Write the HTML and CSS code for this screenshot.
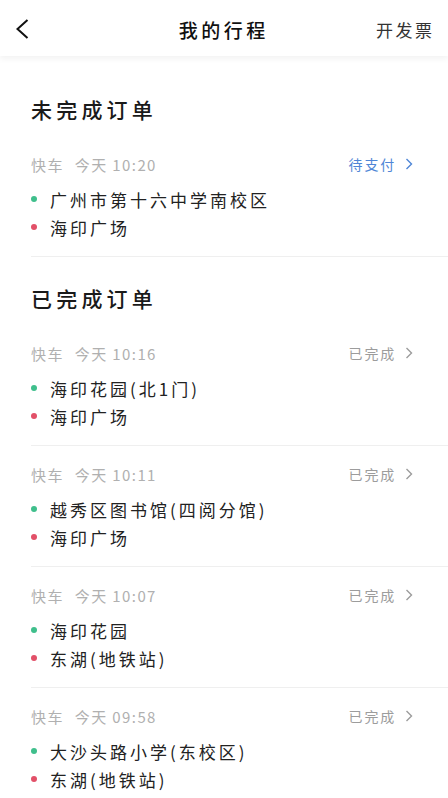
FILE: index.html
```html
<!DOCTYPE html>
<html lang="zh-CN">
<head>
<meta charset="utf-8">
<title>我的行程</title>
<link rel="stylesheet" href="styles.css">
</head>
<body>
<header class="topbar">
  <div class="back">
    <svg width="14" height="20" viewBox="0 0 14 20"><path d="M12.5 1 L2.5 10 L12.5 19" fill="none" stroke="#111" stroke-width="2"/></svg>
  </div>
  <h1 class="title">我的行程</h1>
  <div class="invoice">开发票</div>
</header>

<main>
  <section class="section first">
    <h2 class="heading">未完成订单</h2>
    <div class="order">
      <div class="meta">
        <span class="type">快车</span><span class="time">今天 10:20</span>
        <span class="status pending">待支付<svg class="chev" width="8" height="14" viewBox="0 0 8 14"><path d="M1.5 2 L6.5 7 L1.5 12" fill="none" stroke="currentColor" stroke-width="1.4"/></svg></span>
      </div>
      <div class="place"><i class="dot start"></i>广州市第十六中学南校区</div>
      <div class="place"><i class="dot end"></i>海印广场</div>
    </div>
  </section>

  <section class="section">
    <h2 class="heading">已完成订单</h2>
    <div class="order">
      <div class="meta">
        <span class="type">快车</span><span class="time">今天 10:16</span>
        <span class="status">已完成<svg class="chev" width="8" height="14" viewBox="0 0 8 14"><path d="M1.5 2 L6.5 7 L1.5 12" fill="none" stroke="currentColor" stroke-width="1.4"/></svg></span>
      </div>
      <div class="place"><i class="dot start"></i>海印花园(北1门)</div>
      <div class="place"><i class="dot end"></i>海印广场</div>
    </div>
    <div class="order">
      <div class="meta">
        <span class="type">快车</span><span class="time">今天 10:11</span>
        <span class="status">已完成<svg class="chev" width="8" height="14" viewBox="0 0 8 14"><path d="M1.5 2 L6.5 7 L1.5 12" fill="none" stroke="currentColor" stroke-width="1.4"/></svg></span>
      </div>
      <div class="place"><i class="dot start"></i>越秀区图书馆(四阅分馆)</div>
      <div class="place"><i class="dot end"></i>海印广场</div>
    </div>
    <div class="order">
      <div class="meta">
        <span class="type">快车</span><span class="time">今天 10:07</span>
        <span class="status">已完成<svg class="chev" width="8" height="14" viewBox="0 0 8 14"><path d="M1.5 2 L6.5 7 L1.5 12" fill="none" stroke="currentColor" stroke-width="1.4"/></svg></span>
      </div>
      <div class="place"><i class="dot start"></i>海印花园</div>
      <div class="place"><i class="dot end"></i>东湖(地铁站)</div>
    </div>
    <div class="order">
      <div class="meta">
        <span class="type">快车</span><span class="time">今天 09:58</span>
        <span class="status">已完成<svg class="chev" width="8" height="14" viewBox="0 0 8 14"><path d="M1.5 2 L6.5 7 L1.5 12" fill="none" stroke="currentColor" stroke-width="1.4"/></svg></span>
      </div>
      <div class="place"><i class="dot start"></i>大沙头路小学(东校区)</div>
      <div class="place"><i class="dot end"></i>东湖(地铁站)</div>
    </div>
  </section>
</main>
</body>
</html>
```

FILE: styles.css
```css
* { box-sizing: border-box; }
html, body {
  margin: 0;
  padding: 0;
  background: #fff;
  font-family: "Noto Sans CJK SC", "Noto Sans", sans-serif;
  color: #222;
}
body { overflow: hidden; height: 798px; }

.topbar {
  position: relative;
  height: 56px;
  display: flex;
  align-items: center;
  justify-content: space-between;
  padding: 0 16px 0 15px;
  background: #fff;
  box-shadow: 0 3px 6px rgba(0, 0, 0, 0.05);
  z-index: 1;
}
.back { width: 60px; display: flex; align-items: center; height: 20px; margin-top: 2px; }
.back svg { display: block; }
.title {
  margin: 0;
  font-size: 19px;
  font-weight: 500;
  letter-spacing: 3.5px;
  color: #111;
  margin-top: 2px;
  margin-right: 2px;
}
.invoice {
  width: 60px;
  text-align: right;
  font-size: 17px;
  letter-spacing: 2.5px;
  margin-right: -2.5px;
  color: #333;
  margin-top: 2px;
}

.section { padding-left: 31px; }
.section.first { padding-top: 38px; }
.section + .section { padding-top: 26px; }

.heading {
  margin: 0 0 12px;
  height: 30px;
  line-height: 30px;
  font-size: 21px;
  font-weight: 500;
  letter-spacing: 4.2px;
  color: #1a1a1a;
}

.order {
  padding: 14px 35px 15px 0;
  border-bottom: 1px solid #efefef;
}
.meta {
  display: flex;
  align-items: center;
  height: 28px;
  font-size: 15px;
  letter-spacing: 1.4px;
  color: #b0b0b0;
  margin-bottom: 7px;
}
.meta .time { margin-left: 11px; }
.status {
  margin-left: auto;
  display: flex;
  align-items: center;
  font-size: 14px;
  letter-spacing: 1.8px;
  color: #9c9c9c;
}
.status.pending { color: #4f86d6; }
.chev { margin-left: 9px; display: block; }

.place {
  display: flex;
  align-items: center;
  height: 28px;
  font-size: 17px;
  letter-spacing: 3px;
  color: #222;
}
.dot {
  width: 6px;
  height: 6px;
  border-radius: 50%;
  margin-right: 13px;
  flex: none;
}
.dot.start { background: #3fbf8c; }
.dot.end { background: #e25068; }
```
